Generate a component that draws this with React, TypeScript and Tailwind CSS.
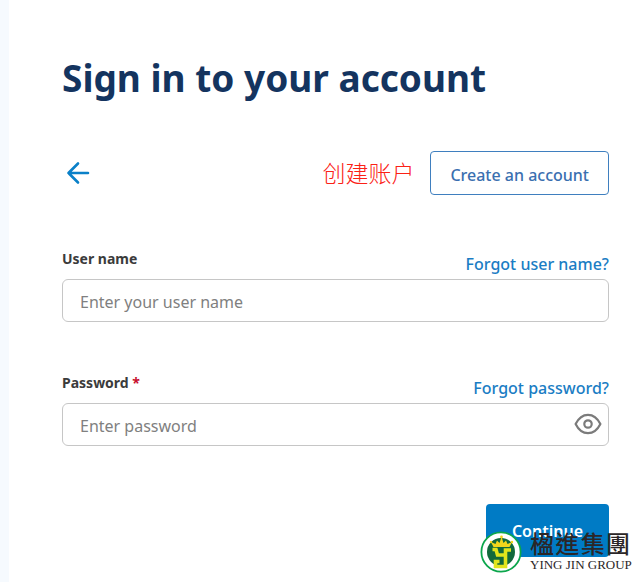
import { useState } from 'react'
import type { ReactNode } from 'react'

interface FieldProps {
  id: string
  label: string
  type: string
  placeholder: string
  help: string
  required?: boolean
  children?: ReactNode
}

function Field({ id, label, type, placeholder, help, required, children }: FieldProps) {
  return (
    <div>
      <div className="flex h-7 items-start justify-between">
        <label htmlFor={id} className="text-sm leading-4 font-bold text-[#3b3b3b]">
          {label}
          {required && <span className="text-[#c8102e]"> *</span>}
        </label>
        <a href="#" className="pt-px text-base leading-6 font-medium text-[#1a7dc4]">
          {help}
        </a>
      </div>
      <div className="relative">
        <input
          id={id}
          type={type}
          placeholder={placeholder}
          required={required}
          className="block h-[43px] w-full rounded-md border border-[#c6c6c6] bg-white px-[17px] pt-0.5 text-base text-[#3b3b3b] placeholder:text-[#808080]"
        />
        {children}
      </div>
    </div>
  )
}

function EyeIcon() {
  return (
    <svg viewBox="0 0 28 22" className="h-[22px] w-7" fill="none" stroke="#7b7b7b" strokeWidth="2.2">
      <path d="M1.6 11C4.6 5 9 1.8 14 1.8S23.4 5 26.4 11C23.4 17 19 20.2 14 20.2S4.6 17 1.6 11Z" strokeLinejoin="round" />
      <circle cx="14" cy="11" r="3.7" />
    </svg>
  )
}

function Crest() {
  return (
    <svg viewBox="0 0 42 42" className="size-[42px] shrink-0" aria-hidden="true">
      <circle cx="21" cy="21" r="19.6" fill="#fff" stroke="#0ca64c" strokeWidth="1.8" />
      <circle cx="21" cy="21" r="14" fill="#11693b" />
      {/* crown */}
      <path d="M13.5 16 11 11l4.5 2L17 9.5l2.500 2.500L21.500 6l2 6L26 9.500l1.500 3.500 4.500-2L29.500 16Z" fill="#f1d61c" />
      <circle cx="11" cy="11" r="1.2" fill="#f1d61c" />
      <circle cx="21.5" cy="6" r="1.4" fill="#f1d61c" />
      <circle cx="32" cy="11" r="1.2" fill="#f1d61c" />
      {/* monogram */}
      <g fill="none" stroke="#e0e51c" strokeWidth="3.6">
        <path d="M12.500 18.500h3.500l1.500 5.500h8" />
        <path d="M31 19h-5.500v16.500H15.500v-5h4" />
      </g>
    </svg>
  )
}

function Watermark() {
  return (
    <div className="pointer-events-none absolute -right-[21px] -bottom-4 flex items-center gap-2 text-[#2b2627]">
      <Crest />
      <div className="w-[100px] font-['Liberation_Serif','Noto_Sans_CJK_TC',serif] whitespace-nowrap">
        <div className="flex justify-between pt-0.5 text-2xl leading-6 font-medium">
          {['楹', '進', '集', '團'].map((c) => (
            <span key={c}>{c}</span>
          ))}
        </div>
        <div className="text-[13px] leading-4">YING JIN GROUP</div>
      </div>
    </div>
  )
}

export default function App() {
  const [visible, setVisible] = useState(false)

  return (
    <div className="min-h-screen bg-[#f6fafe] pl-[9px] font-['Noto_Sans','Noto_Sans_CJK_SC',sans-serif]">
      <main className="min-h-screen bg-white pt-[54px] pr-[31px] pb-6 pl-[53px]">
        <h1 className="text-[37px] leading-12 font-bold whitespace-nowrap text-[#14345f]">Sign in to your account</h1>

        <div className="mt-[49px] flex items-center justify-between">
          <button type="button" aria-label="Back" className="pl-1">
            <svg viewBox="0 0 24 24" className="size-6" fill="none" stroke="#0a80c8" strokeWidth="2.6" strokeLinecap="round" strokeLinejoin="round">
              <path d="M22 12H2.5M12 2.5 2.5 12l9.5 9.5" />
            </svg>
          </button>
          <div className="flex items-center gap-4">
            <span className="text-[23px] leading-8 font-light text-[#fb2116]">创建账户</span>
            <button type="button" className="h-11 rounded border border-[#3f7fbf] px-[19px] pt-1 text-base font-medium whitespace-nowrap text-[#3a6fb0]">
              Create an account
            </button>
          </div>
        </div>

        <form className="mt-14" onSubmit={(e) => e.preventDefault()}>
          <div className="flex flex-col gap-[53px]">
            <Field id="username" label="User name" type="text" placeholder="Enter your user name" help="Forgot user name?" />
            <Field
              id="password"
              label="Password"
              type={visible ? 'text' : 'password'}
              placeholder="Enter password"
              help="Forgot password?"
              required
            >
              <button
                type="button"
                aria-label="Show password"
                onClick={() => setVisible(!visible)}
                className="absolute top-2.5 right-[7px]"
              >
                <EyeIcon />
              </button>
            </Field>
          </div>
          <div className="relative mt-[58px] flex justify-end">
            <button type="submit" className="h-[53px] rounded bg-[#007bc5] px-[26px] text-base font-semibold text-white">
              Continue
            </button>
            <Watermark />
          </div>
        </form>
      </main>
    </div>
  )
}
